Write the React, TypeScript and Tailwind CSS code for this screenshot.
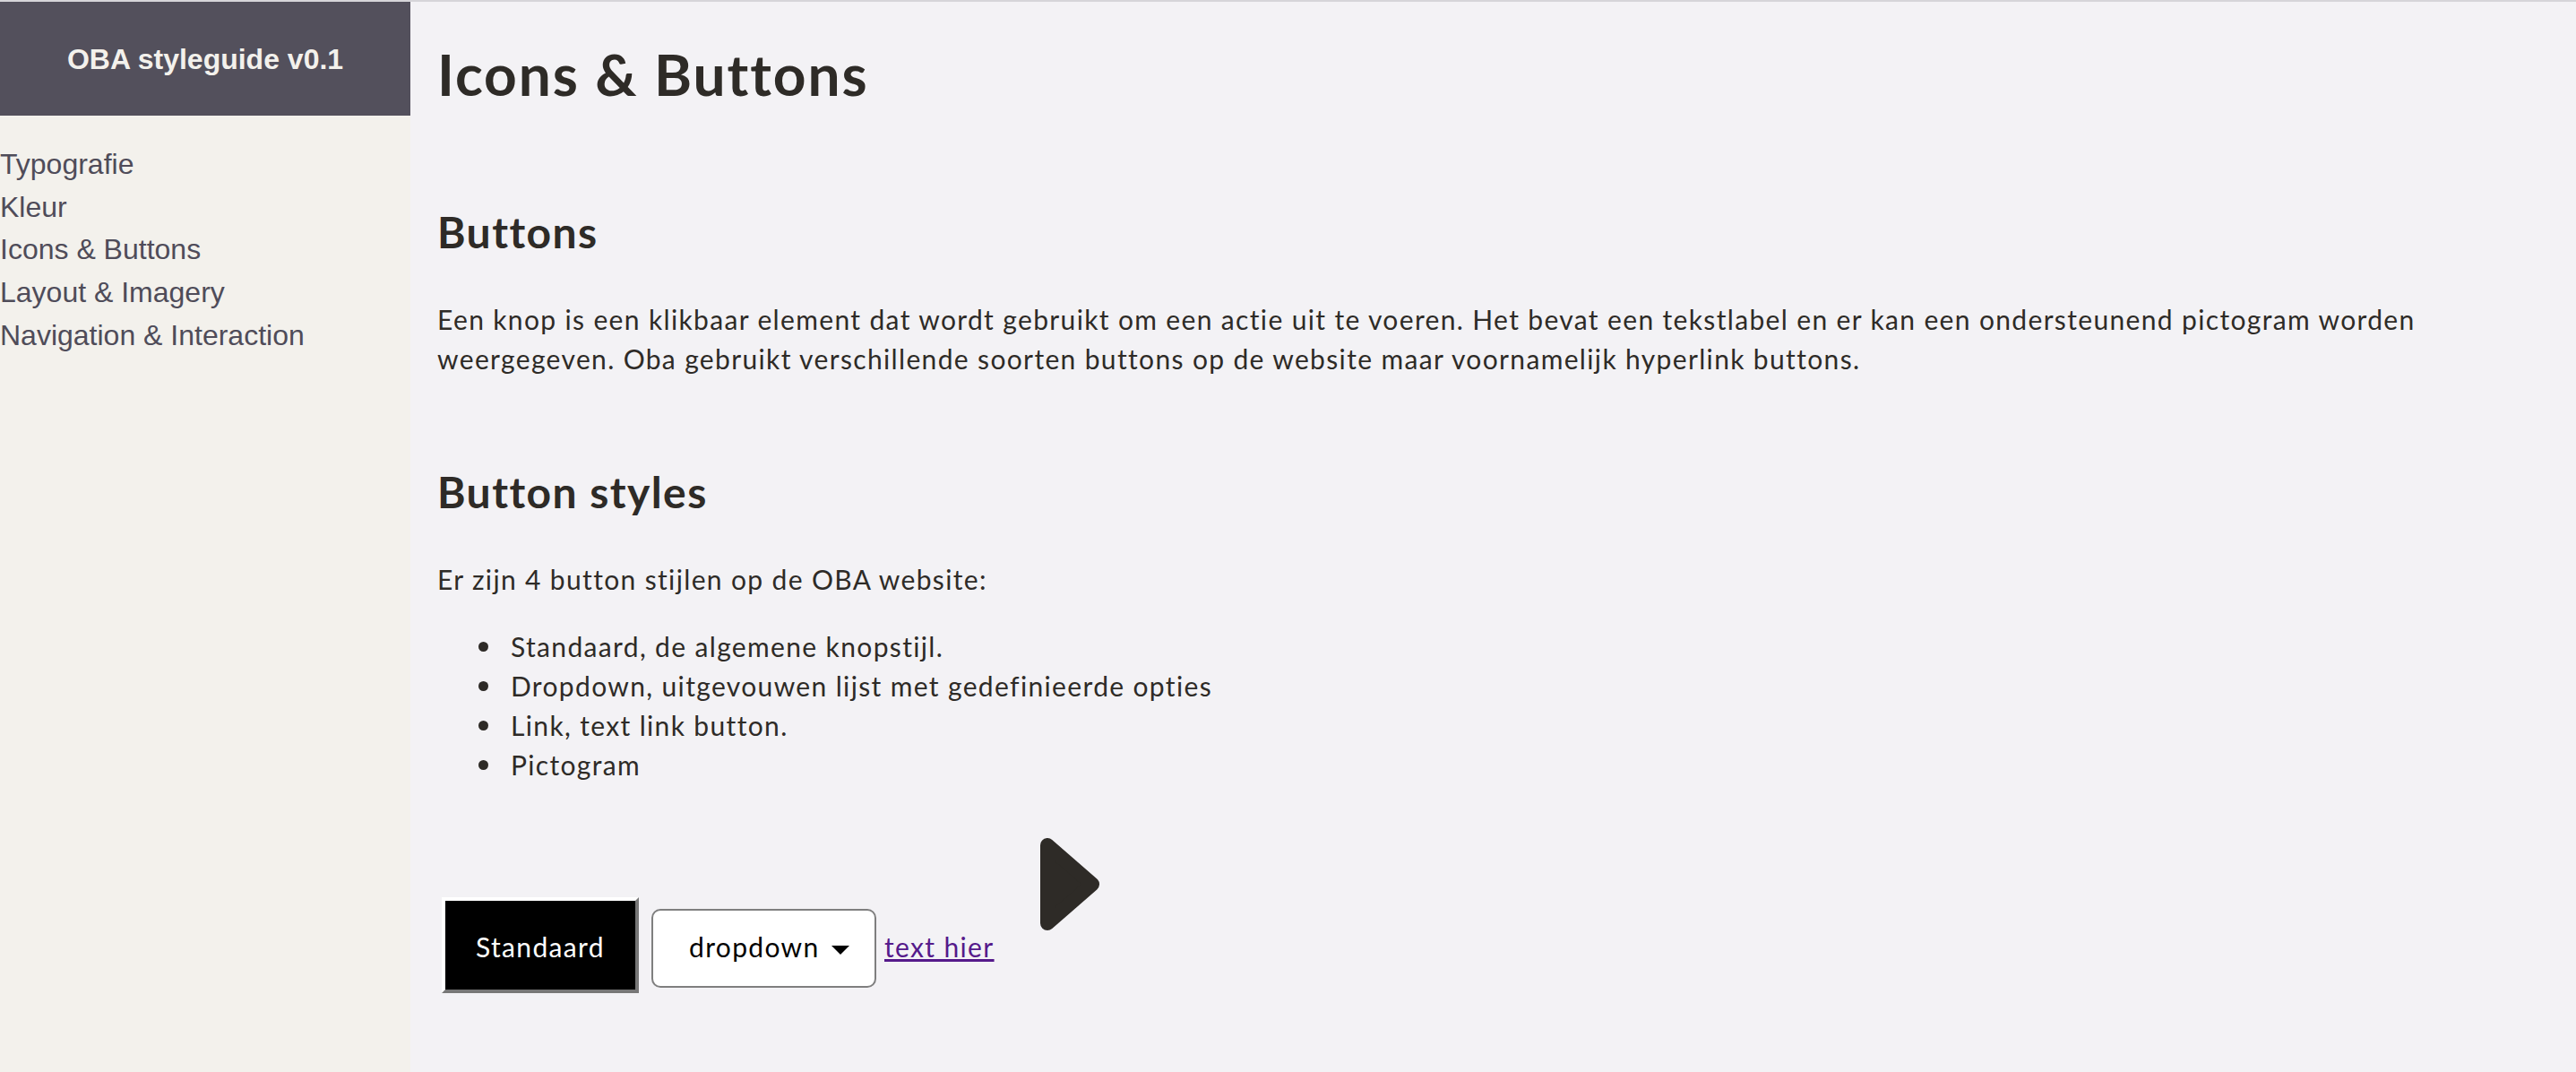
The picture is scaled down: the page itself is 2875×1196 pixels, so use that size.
export default function App() {
  const nav = [
    "Typografie",
    "Kleur",
    "Icons & Buttons",
    "Layout & Imagery",
    "Navigation & Interaction",
  ];
  const styles = [
    "Standaard, de algemene knopstijl.",
    "Dropdown, uitgevouwen lijst met gedefinieerde opties",
    "Link, text link button.",
    "Pictogram",
  ];

  return (
    <div className="flex min-h-screen border-t-2 border-[#d6d5d9]">
      <aside className="w-[458px] shrink-0 bg-[#f3f1ec] font-['Liberation_Sans',Arial,sans-serif]">
        <div className="flex h-[127px] items-center justify-center bg-[#53505c]">
          <h2 className="text-[32px] font-bold text-[#f3f1ec]">OBA styleguide v0.1</h2>
        </div>
        <ul className="mt-[31px] text-[32px] leading-[47.7px] text-[#4f4c59]">
          {nav.map((item) => (
            <li key={item}>
              <a href="#">{item}</a>
            </li>
          ))}
        </ul>
      </aside>

      <main className="flex-1 bg-[#f3f2f5] pl-[30px] pr-[30px] pt-[43px] font-['Lato',sans-serif] text-[#2e2b27]">
        <h1 className="text-[64px] font-bold leading-[76px] tracking-[0.03em]">Icons &amp; Buttons</h1>

        <h2 className="mt-[109px] text-[48px] font-bold leading-[58px] tracking-[0.03em]">Buttons</h2>
        <p className="mt-[46px] max-w-[2300px] text-[30px] leading-[44px] tracking-[0.045em]">
          Een knop is een klikbaar element dat wordt gebruikt om een actie uit te voeren. Het bevat een
          tekstlabel en er kan een ondersteunend pictogram worden weergegeven. Oba gebruikt verschillende
          soorten buttons op de website maar voornamelijk hyperlink buttons.
        </p>

        <h2 className="mt-[98px] text-[48px] font-bold leading-[58px] tracking-[0.03em]">Button styles</h2>
        <p className="mt-[46px] text-[30px] leading-[44px] tracking-[0.045em]">
          Er zijn 4 button stijlen op de OBA website:
        </p>
        <ul className="mt-[31px] text-[30px] leading-[44px] tracking-[0.045em]">
          {styles.map((s) => (
            <li key={s} className="flex items-center">
              <span className="ml-[46px] mr-[25px] h-[11px] w-[11px] rounded-full bg-[#2e2b27]" />
              <span>{s}</span>
            </li>
          ))}
        </ul>

        <div className="mt-[60px] flex items-baseline text-[30px] leading-[44px] tracking-[0.045em]">
          <div className="ml-[5px] w-[220px] border-4 border-t-white border-l-white border-r-[#777] border-b-[#777] bg-black pb-[26px] pt-[29px] text-center text-white">
            Standaard
          </div>
          <div className="ml-[14px] w-[251px] rounded-[10px] border-2 border-[#7f7f7f] bg-white pb-[22px] pl-[40px] pt-[18px] text-black">
            dropdown
            <svg className="ml-[13px] inline-block align-middle" width="20" height="10" viewBox="0 0 20 10">
              <path d="M0 0h20L10 10z" fill="#000" />
            </svg>
          </div>
          <a href="#" className="ml-[9px] text-[#551a8b] underline">
            text hier
          </a>
          <svg className="ml-[51px]" width="66" height="133" viewBox="0 0 66 133">
            <path
              d="M8 8L8 95L58 51.5Z"
              fill="#2e2b27"
              stroke="#2e2b27"
              strokeWidth="16"
              strokeLinejoin="round"
            />
          </svg>
        </div>
      </main>
    </div>
  );
}
